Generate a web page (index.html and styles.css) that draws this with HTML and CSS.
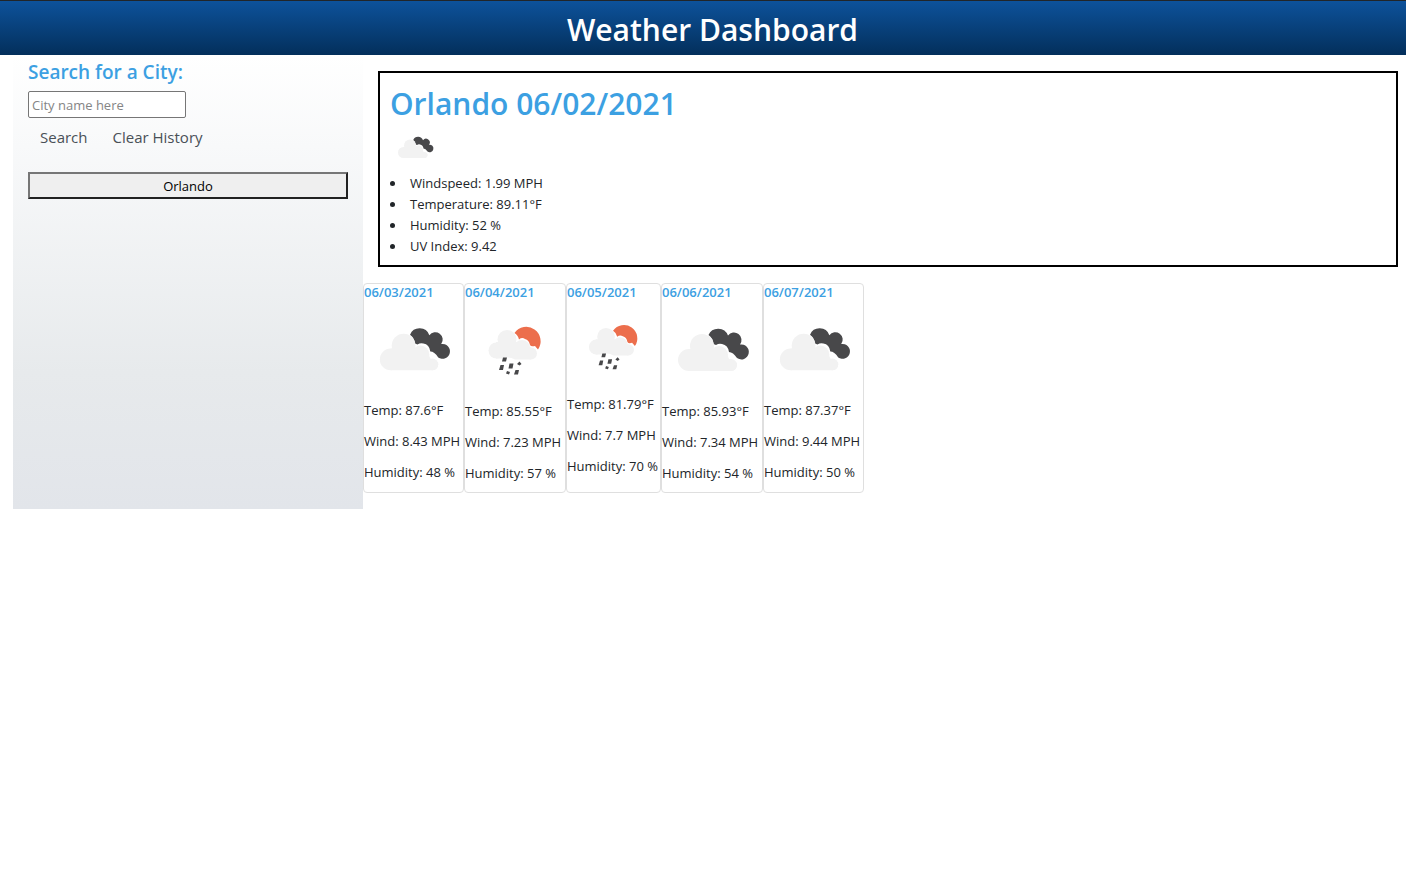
FILE: index.html
```
<!DOCTYPE html>
<html lang="en">
<head>
<meta charset="utf-8">
<title>Weather Dashboard</title>
<link rel="stylesheet" href="styles.css">
</head>
<body>
<svg class="symbols" aria-hidden="true">
  <symbol id="clouds" viewBox="0 0 100 100">
    <path class="dark" d="M46.500 34A10.500 10.500 0 0 1 66 34.500A7.500 7.500 0 0 1 78 43.500A7.500 7.500 0 1 1 75 57Q71 51 67 51Q66 44 60 43Q57 42 54 44L51.500 43Q51 37 46.500 34Z"/>
    <g class="light"><circle cx="27" cy="59" r="11"/><circle cx="40" cy="45" r="12"/><circle cx="57" cy="54" r="9"/><circle cx="69" cy="64" r="6"/><path d="M27 48H50L64 51L67 58L75 62Q75 70 69 70H27Z"/></g>
  </symbol>
  <symbol id="rain" viewBox="0 0 100 100">
    <path class="sun" d="M49.500 32A13.500 13.500 0 1 1 73 48.500L70 45Q66 46 65 44Q64 39 60 38Q57 36 54 38.500Q53 34 49.500 32Z"/>
    <g class="light"><circle cx="31.500" cy="49.500" r="8"/><circle cx="42" cy="38.500" r="9.500"/><circle cx="57" cy="47" r="8"/><circle cx="66" cy="52.500" r="6"/><path d="M31 41H57L66 46.500V58.500H50Q44 55 38 57.500H31Z"/></g>
    <path class="drops" d="M38 56.500h4l-1 4h-4zM35.500 64h3.500l-1 5h-4zM44.500 62.500h4l-1 5h-4zM54.500 60.500l2 2.500-2 1.500-2.500-1.500zM42 70l3 1-1 2.500-3-1zM50.500 69h3.500l-1 4.500h-4z"/>
  </symbol>
</svg>
<header class="banner"><h1>Weather Dashboard</h1></header>
<main class="layout">
  <aside class="sidebar">
    <form class="search">
      <label for="city">Search for a City:</label>
      <input id="city" type="text" placeholder="City name here">
      <div class="actions">
        <button class="btn" type="button">Search</button>
        <button class="btn" type="button">Clear History</button>
      </div>
    </form>
    <button class="history" type="button">Orlando</button>
  </aside>
  <div class="content">
    <section class="current">
      <h2>Orlando 06/02/2021</h2>
      <svg class="icon" viewBox="0 0 100 100" role="img" aria-label="Cloudy"><use href="#clouds"/></svg>
      <ul>
        <li>Windspeed: 1.99 MPH</li>
        <li>Temperature: 89.11°F</li>
        <li>Humidity: 52 %</li>
        <li>UV Index: 9.42</li>
      </ul>
    </section>
    <section class="forecast">
      <article class="card">
        <h3>06/03/2021</h3>
        <svg class="icon" viewBox="0 0 100 100" role="img" aria-label="Cloudy"><use href="#clouds"/></svg>
        <p>Temp: 87.6°F</p><p>Wind: 8.43 MPH</p><p>Humidity: 48 %</p>
      </article>
      <article class="card">
        <h3>06/04/2021</h3>
        <svg class="icon" viewBox="0 0 100 100" role="img" aria-label="Rain"><use href="#rain"/></svg>
        <p>Temp: 85.55°F</p><p>Wind: 7.23 MPH</p><p>Humidity: 57 %</p>
      </article>
      <article class="card">
        <h3>06/05/2021</h3>
        <svg class="icon" viewBox="0 0 100 100" role="img" aria-label="Rain"><use href="#rain"/></svg>
        <p>Temp: 81.79°F</p><p>Wind: 7.7 MPH</p><p>Humidity: 70 %</p>
      </article>
      <article class="card">
        <h3>06/06/2021</h3>
        <svg class="icon" viewBox="0 0 100 100" role="img" aria-label="Cloudy"><use href="#clouds"/></svg>
        <p>Temp: 85.93°F</p><p>Wind: 7.34 MPH</p><p>Humidity: 54 %</p>
      </article>
      <article class="card">
        <h3>06/07/2021</h3>
        <svg class="icon" viewBox="0 0 100 100" role="img" aria-label="Cloudy"><use href="#clouds"/></svg>
        <p>Temp: 87.37°F</p><p>Wind: 9.44 MPH</p><p>Humidity: 50 %</p>
      </article>
    </section>
  </div>
</main>
</body>
</html>
```
FILE: styles.css
```
* { box-sizing: border-box; }
body {
  margin: 0;
  background: #fff;
  color: #212529;
  font: 13px/21px "Open Sans", "Noto Sans", sans-serif;
}
h1, h2, h3, p, ul { margin: 0; }
button, input { font: inherit; }

.symbols { display: none; }
.dark, .drops { fill: #48484a; }
.light { fill: #f2f2f2; }
.sun { fill: #ec6e4c; }

.banner {
  padding: 10px 0 6px 19px;
  border-top: 1px solid #212529;
  background: linear-gradient(#0d529b, #032f5b);
  color: #fff;
  text-align: center;
}
.banner h1 { font-size: 30px; line-height: 38px; font-weight: 600; }

.layout { display: flex; padding-left: 13px; }
.sidebar {
  flex: 0 0 350px;
  padding: 5px 15px;
  background: linear-gradient(#fff, #f8f9fa 20%, #e7eaec 70%, #e2e5ea);
}
.search { display: flex; flex-direction: column; align-items: flex-start; }
.search label {
  margin-bottom: 7px;
  color: #3ca0e2;
  font-size: 19px;
  line-height: 24px;
  font-weight: 600;
}
.search input {
  width: 158px;
  height: 27px;
  padding: 1px 3px;
  border: 1px solid #767676;
  border-radius: 2px;
  background: #fff;
}
.search input::placeholder { color: #858585; }
.actions { display: flex; }
.btn {
  padding: 7px 13px 7px 12px;
  border: 0;
  background: none;
  color: #495057;
  font-size: 15px;
  line-height: 24px;
}
.history {
  display: block;
  width: 100%;
  height: 27px;
  margin-top: 16px;
  padding: 2px 6px 0;
  border: 2px solid;
  border-color: #767676 #212121 #212121 #767676;
  background: #efefef;
  color: #000;
}

.content { flex: 1; min-width: 0; padding: 16px 0; }
.current {
  margin: 0 8px 16px 15px;
  padding: 12px 10px 8px;
  border: 2px solid #000;
}
.current h2 {
  color: #3ca0e2;
  font-size: 30px;
  line-height: 38px;
  font-weight: 600;
}
.current .icon { display: block; width: 50px; height: 50px; }
.current ul { padding: 0; list-style: none; }
.current li { display: flex; align-items: center; gap: 15px; }
.current li::before {
  content: "";
  width: 5px;
  height: 5px;
  border-radius: 50%;
  background: #212529;
}

.forecast {
  display: grid;
  grid-template-columns: 101px 102px 95px 102px 101px;
}
.card {
  padding-bottom: 8px;
  border: 1px solid #dfdfdf;
  border-radius: 4px;
  white-space: nowrap;
}
.card h3 { color: #3ca0e2; font-size: 13px; line-height: 17px; font-weight: 600; }
.card .icon { display: block; width: 100%; height: auto; }
.card p + p { margin-top: 10px; }
```
